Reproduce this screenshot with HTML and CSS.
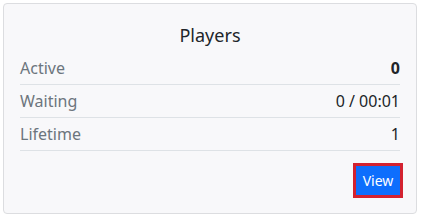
FILE: index.html
```html
<!DOCTYPE html>
<html lang="en">
<head>
    <meta charset="UTF-8">
    <meta name="viewport" content="width=device-width, initial-scale=1.0">
    <title>Players</title>
    <link rel="stylesheet" href="styles.css">
</head>
<body>
    <div class="card">
        <h5 class="card-title">Players</h5>
        <table class="stats">
            <tr>
                <td class="label">Active</td>
                <td class="value"><b>0</b></td>
            </tr>
            <tr>
                <td class="label">Waiting</td>
                <td class="value">0 / 00:01</td>
            </tr>
            <tr>
                <td class="label">Lifetime</td>
                <td class="value">1</td>
            </tr>
        </table>
        <div class="actions">
            <button class="btn-view">View</button>
        </div>
    </div>
</body>
</html>
```

FILE: styles.css
```css
body {
    margin: 0;
    padding: 3px;
    background-color: #fff;
    font-family: "Noto Sans", "Open Sans", sans-serif;
    color: #212529;
}
.card {
    width: 380px;
    padding: 16px 16px 18px;
    background-color: #f8f8fa;
    border: 1px solid #dcdde0;
    border-radius: 4px;
}
.card-title {
    margin: 3px 0 5px;
    font-size: 18px;
    font-weight: 400;
    line-height: 24px;
    text-align: center;
}
.stats {
    width: 100%;
    border-collapse: collapse;
    font-size: 16px;
}
.stats td {
    padding: 4px 0;
    line-height: 24px;
    border-bottom: 1px solid #dee2e6;
}
.stats .label {
    color: #6c757d;
}
.stats .value {
    text-align: right;
}
.actions {
    display: flex;
    justify-content: flex-end;
    margin-top: 15px;
}
.btn-view {
    width: 44px;
    height: 29px;
    padding: 0;
    border: none;
    background-color: #0d6efd;
    color: #fff;
    font-family: inherit;
    font-size: 14px;
    outline: 3px solid #d32230;
    cursor: pointer;
}
```
